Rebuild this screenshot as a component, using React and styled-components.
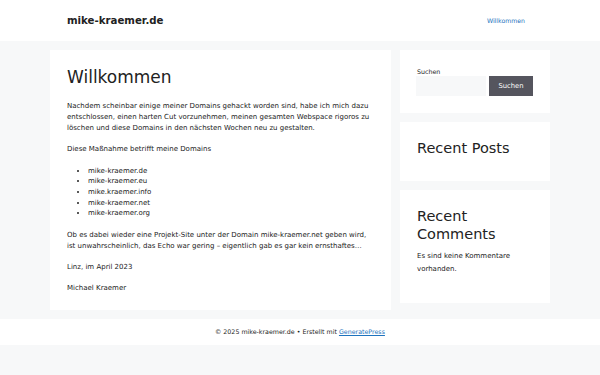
import styled, { createGlobalStyle } from "styled-components";

const GlobalStyle = createGlobalStyle`
    body {
        margin: 0;
        background-color: #f7f8f9;
        font-family: "DejaVu Sans", "Noto Sans", sans-serif;
        color: #222222;
    }
`;

const Header = styled.header`
    background-color: #ffffff;
    height: 41px;
`;

const HeaderInner = styled.div`
    width: 500px;
    margin: 0 auto;
    height: 100%;
    padding: 0 17px;
    box-sizing: border-box;
    display: flex;
    align-items: center;
    justify-content: space-between;
`;

const SiteTitle = styled.a`
    font-size: 10.2px;
    font-weight: bold;
    color: #222222;
    text-decoration: none;
`;

const NavLink = styled.a`
    font-size: 6.2px;
    color: #1e73be;
    text-decoration: none;
    margin-right: 8px;
`;

const Container = styled.div`
    width: 500px;
    margin: 9px auto 0;
    display: flex;
    align-items: flex-start;
    gap: 9px;
`;

const Article = styled.main`
    width: 341px;
    background-color: #ffffff;
    padding: 17px 17px 16px;
    box-sizing: border-box;
    font-size: 7px;
    line-height: 10.7px;

    p,
    ul {
        margin: 0 0 10.7px;
    }
    ul {
        padding-left: 21px;
    }
    > :last-child {
        margin-bottom: 0;
    }
`;

const Title = styled.h1`
    font-size: 17px;
    font-weight: normal;
    line-height: 20.4px;
    margin: 0 0 14px;
`;

const Sidebar = styled.aside`
    width: 150px;
    display: flex;
    flex-direction: column;
    gap: 9px;
`;

const Widget = styled.section`
    background-color: #ffffff;
    padding: 17px;
    box-sizing: border-box;
`;

const WidgetTitle = styled.h2`
    font-size: 14.5px;
    font-weight: normal;
    line-height: 18.5px;
    margin: 0 0 ${(props) => props.$gap || 6}px;
`;

const Label = styled.label`
    display: block;
    font-size: 6.3px;
    line-height: 9px;
`;

const SearchRow = styled.div`
    display: flex;
    gap: 3px;
    margin-left: -1px;
`;

const SearchInput = styled.input`
    flex: 1;
    min-width: 0;
    height: 20px;
    box-sizing: border-box;
    border: none;
    background-color: #f7f8f9;
`;

const SearchButton = styled.button`
    width: 44px;
    height: 20px;
    border: none;
    background-color: #55555e;
    color: #ffffff;
    font-family: inherit;
    font-size: 6.8px;
    padding: 0;
`;

const WidgetText = styled.p`
    font-size: 7px;
    line-height: 13px;
    margin: 0 0 10px;
`;

const Footer = styled.footer`
    background-color: #ffffff;
    margin-top: 9px;
    height: 26px;
    display: flex;
    align-items: center;
    justify-content: center;
    font-size: 6.3px;
    color: #222222;

    a {
        color: #1e73be;
    }
`;

const domains = [
    "mike-kraemer.de",
    "mike-kraemer.eu",
    "mike.kraemer.info",
    "mike-kraemer.net",
    "mike-kraemer.org",
];

const App = () => {
    return (
        <>
            <GlobalStyle />
            <Header>
                <HeaderInner>
                    <SiteTitle href="#">mike-kraemer.de</SiteTitle>
                    <NavLink href="#">Willkommen</NavLink>
                </HeaderInner>
            </Header>
            <Container>
                <Article>
                    <Title>Willkommen</Title>
                    <p>
                        Nachdem scheinbar einige meiner Domains gehackt worden sind, habe ich mich dazu
                        entschlossen, einen harten Cut vorzunehmen, meinen gesamten Webspace rigoros zu
                        löschen und diese Domains in den nächsten Wochen neu zu gestalten.
                    </p>
                    <p>Diese Maßnahme betrifft meine Domains</p>
                    <ul>
                        {domains.map((d) => (
                            <li key={d}>{d}</li>
                        ))}
                    </ul>
                    <p>
                        Ob es dabei wieder eine Projekt-Site unter der Domain mike-kraemer.net geben wird,
                        ist unwahrscheinlich, das Echo war gering – eigentlich gab es gar kein ernsthaftes…
                    </p>
                    <p>Linz, im April 2023</p>
                    <p>Michael Kraemer</p>
                </Article>
                <Sidebar>
                    <Widget>
                        <Label htmlFor="search">Suchen</Label>
                        <SearchRow>
                            <SearchInput id="search" type="search" />
                            <SearchButton>Suchen</SearchButton>
                        </SearchRow>
                    </Widget>
                    <Widget>
                        <WidgetTitle>Recent Posts</WidgetTitle>
                    </Widget>
                    <Widget>
                        <WidgetTitle>Recent Comments</WidgetTitle>
                        <WidgetText>Es sind keine Kommentare vorhanden.</WidgetText>
                    </Widget>
                </Sidebar>
            </Container>
            <Footer>
                <span>
                    © 2025 mike-kraemer.de • Erstellt mit <a href="#">GeneratePress</a>
                </span>
            </Footer>
        </>
    );
};

export default App;
